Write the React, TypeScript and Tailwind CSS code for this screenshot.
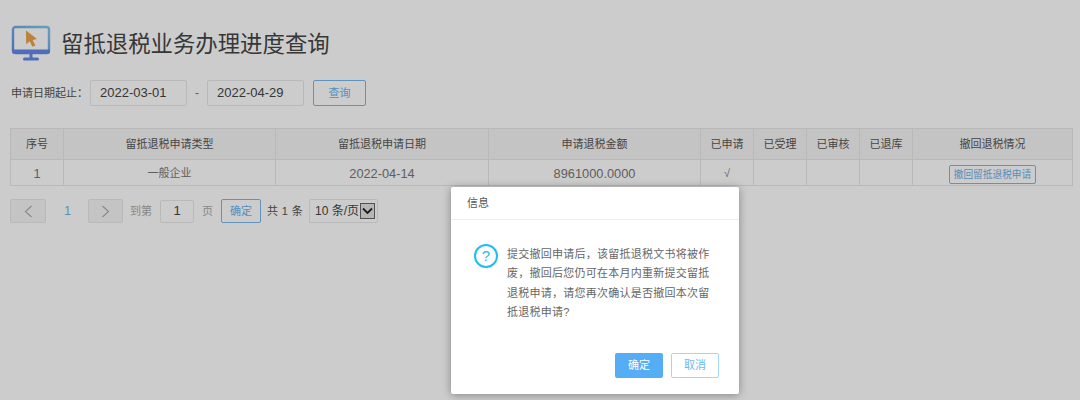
import React from 'react'

const columns = [
  { label: '序号', width: 'w-[53px]' },
  { label: '留抵退税申请类型', width: 'w-[212px]' },
  { label: '留抵退税申请日期', width: 'w-[213px]' },
  { label: '申请退税金额', width: 'w-[212px]' },
  { label: '已申请', width: 'w-[53px]' },
  { label: '已受理', width: 'w-[53px]' },
  { label: '已审核', width: 'w-[53px]' },
  { label: '已退库', width: 'w-[53px]' },
  { label: '撤回退税情况', width: 'w-[160px]' },
]

const rowCells = ['1', '一般企业', '2022-04-14', '8961000.0000', '√', '', '', '']

// full-width punctuation
const dateLabel = '申请日期起止\uFF1A'
const message =
  '提交撤回申请后\uFF0C该留抵退税文书将被作废\uFF0C撤回后您仍可在本月内重新提交留抵退税申请\uFF0C请您再次确认是否撤回本次留抵退税申请?'

function MonitorIcon() {
  return (
    <svg width="40" height="37" viewBox="0 0 40 37" fill="none">
      <defs>
        <linearGradient id="screen" x1="0" y1="1" x2="1" y2="0">
          <stop offset="0" stopColor="#6489ea" />
          <stop offset="1" stopColor="#80c8ea" />
        </linearGradient>
      </defs>
      <rect x="2" y="2" width="36" height="26" rx="2.5" stroke="url(#screen)" strokeWidth="2.4" />
      <path d="M1 24.5h38v2a2.5 2.5 0 0 1-2.5 2.5h-33A2.5 2.5 0 0 1 1 26.5z" fill="#6489ea" />
      <rect x="18.5" y="29" width="3" height="4" fill="#6489ea" />
      <rect x="12" y="32.5" width="16" height="3" rx="1.5" fill="#6489ea" />
      <path d="M15 5.5l11 8.5-4.4.9 2.8 5.6-3 1.3-2.6-5.6-3.6 3z" fill="#eda248" />
    </svg>
  )
}

export default function App() {
  return (
    <div
      className="relative h-[400px] w-[1080px] overflow-hidden bg-white text-[#333]"
      style={{ fontFamily: '"Liberation Sans", "Noto Sans CJK SC", sans-serif' }}
    >
      <div className="flex h-[80px] items-start pl-[11px] pt-[25px]">
        <MonitorIcon />
        <h1 className="mt-[1px] ml-[10px] text-[22.4px] leading-[38px] font-normal text-[#454545]">
          留抵退税业务办理进度查询
        </h1>
      </div>

      <div className="flex h-[26px] items-center pl-[11px] text-[12px] text-[#555]">
        <span className="w-[79px] text-[11px] whitespace-nowrap">{dateLabel}</span>
        <div className="flex h-[26px] w-[97px] items-center rounded-[2px] border border-[#e8e8e8] pl-[9px] text-[13px] text-[#444]">
          2022-03-01
        </div>
        <span className="w-[20px] text-center text-[#777]">-</span>
        <div className="flex h-[26px] w-[97px] items-center rounded-[2px] border border-[#e8e8e8] pl-[9px] text-[13px] text-[#444]">
          2022-04-29
        </div>
        <button className="ml-[9px] h-[26px] w-[53px] rounded-[2px] border border-[#7ab8ec] text-[11px] text-[#6cb2ec]">
          查询
        </button>
      </div>

      <table className="mt-[22px] ml-[10px] w-[1062px] table-fixed border-collapse text-center text-[11px]">
        <thead>
          <tr className="h-[31px] bg-[#f6f6f6] text-[#555]">
            {columns.map((col) => (
              <th key={col.label} className={`${col.width} border border-[#e8e8e8] font-normal`}>
                {col.label}
              </th>
            ))}
          </tr>
        </thead>
        <tbody>
          <tr className="h-[26px] text-[#777]">
            {rowCells.map((cell, i) => (
              <td key={i} className={`border border-[#e8e8e8] pt-[2px] ${i === 2 || i === 3 || i === 0 ? 'text-[12.8px]' : ''}`}>
                {cell}
              </td>
            ))}
            <td className="border border-[#e8e8e8] pt-[3px]">
              <button className="block mx-auto h-[19px] w-[87px] rounded-[2px] border border-[#7ab8ec] text-[9.7px] leading-[17px] text-[#6cb2ec]">
                撤回留抵退税申请
              </button>
            </td>
          </tr>
        </tbody>
      </table>

      <div className="mt-[13px] ml-[10px] flex h-[24px] items-center text-[11px] text-[#aaa]">
        <button className="flex h-[24px] w-[36px] items-center justify-center rounded-[2px] border border-[#e8e8e8] bg-[#f6f6f6]">
          <svg width="9" height="13" viewBox="0 0 9 13" fill="none" stroke="#aaa" strokeWidth="1.1">
            <path d="M7.5 1L1.5 6.5L7.5 12" />
          </svg>
        </button>
        <span className="w-[42px] pl-[1px] text-center text-[12px] text-[#6cb2ec]">1</span>
        <button className="flex h-[24px] w-[35px] items-center justify-center rounded-[2px] border border-[#e8e8e8] bg-[#f6f6f6]">
          <svg width="9" height="13" viewBox="0 0 9 13" fill="none" stroke="#aaa" strokeWidth="1.1">
            <path d="M1.5 1L7.5 6.5L1.5 12" />
          </svg>
        </button>
        <span className="ml-[7px] w-[30px]">到第</span>
        <div className="flex h-[23px] w-[34px] items-center justify-center rounded-[2px] border border-[#e8e8e8] text-[13px] text-[#444]">
          1
        </div>
        <span className="ml-[8px] w-[19px]">页</span>
        <button className="h-[24px] w-[40px] rounded-[2px] border border-[#7ab8ec] text-[#6cb2ec]">确定</button>
        <span className="ml-[6px] w-[42px] tracking-[0.4px] text-[#555]">共 1 条</span>
        <div className="flex h-[24px] w-[69px] items-center rounded-[2px] border border-[#e8e8e8] pl-[5px] text-[12px] text-[#444]">
          <span className="w-[43px] whitespace-nowrap">10 条/页</span>
          <span className="ml-[2px] flex h-[16px] w-[15px] items-center justify-center border border-[#666] bg-[#e4e4e4]">
            <svg width="11" height="8" viewBox="0 0 11 8" fill="none" stroke="#222" strokeWidth="1.8">
              <path d="M1 1.5L5.5 6L10 1.5" />
            </svg>
          </span>
        </div>
      </div>

      <div className="absolute inset-0 bg-black/20" />

      <div className="absolute top-[187px] left-[451px] h-[207px] w-[288px] rounded-[2px] bg-white shadow-[0_1px_8px_rgba(0,0,0,0.35)]">
        <div className="flex h-[33px] items-center border-b border-[#eee] pl-[16px] text-[11px] text-[#555]">信息</div>
        <div className="flex pt-[24px] pl-[23px]">
          <span className="flex h-[24px] w-[24px] shrink-0 items-center justify-center rounded-full border-2 border-[#22bdf0] text-[15px] text-[#22bdf0]">
            ?
          </span>
          <p className="mt-[1px] ml-[9px] w-[204px] text-[11px] leading-[19.3px] tracking-[0.25px] text-[#666]">
            {message}
          </p>
        </div>
        <div className="absolute right-[20px] bottom-[16px] flex gap-[8px] text-[11px]">
          <button className="h-[25px] w-[48px] rounded-[2px] bg-[#55aef5] text-white">确定</button>
          <button className="h-[25px] w-[48px] rounded-[2px] border-[1.5px] border-[#a6d5f8] text-[#6cb8f2]">取消</button>
        </div>
      </div>
    </div>
  )
}
